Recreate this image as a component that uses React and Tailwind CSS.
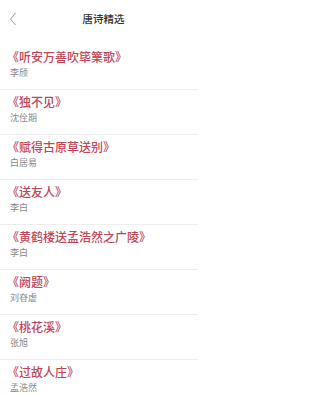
import React from "react";

const poems = [
  { title: "听安万善吹筚篥歌", author: "李颀" },
  { title: "独不见", author: "沈佺期" },
  { title: "赋得古原草送别", author: "白居易" },
  { title: "送友人", author: "李白" },
  { title: "黄鹤楼送孟浩然之广陵", author: "李白" },
  { title: "阙题", author: "刘昚虚" },
  { title: "桃花溪", author: "张旭" },
  { title: "过故人庄", author: "孟浩然" },
];

const App = () => {
  return (
    <div
      className="w-[207px] h-[396px] overflow-hidden bg-white"
      style={{ fontFamily: '"Noto Sans CJK SC", "Noto Sans", sans-serif' }}
    >
      {/* --- Header --- */}
      <div className="relative h-[38px] flex items-center justify-center">
        <svg
          className="absolute left-[9px] top-[12px]"
          width="8"
          height="14"
          viewBox="0 0 8 14"
          fill="none"
          stroke="#9a9a9a"
          strokeWidth="1"
        >
          <path d="M6.5 1 L1.5 7 L6.5 13" />
        </svg>
        <span className="text-[10.5px] leading-none font-medium text-[#333]">唐诗精选</span>
      </div>

      {/* --- Poem list --- */}
      <div className="mt-[7px]">
        {poems.map((p, i) => (
          <div key={i} className="pt-[5px] pb-[10px] border-b border-[#eeeeee] mr-[9px]">
            <div className="pl-[7px] text-[12px] leading-[14px] font-medium text-[#c24656] whitespace-nowrap">
              《{p.title}》
            </div>
            <div className="pl-[10px] mt-[3px] text-[9px] leading-[12px] text-[#888]">
              {p.author}
            </div>
          </div>
        ))}
      </div>
    </div>
  );
};

export default App;
